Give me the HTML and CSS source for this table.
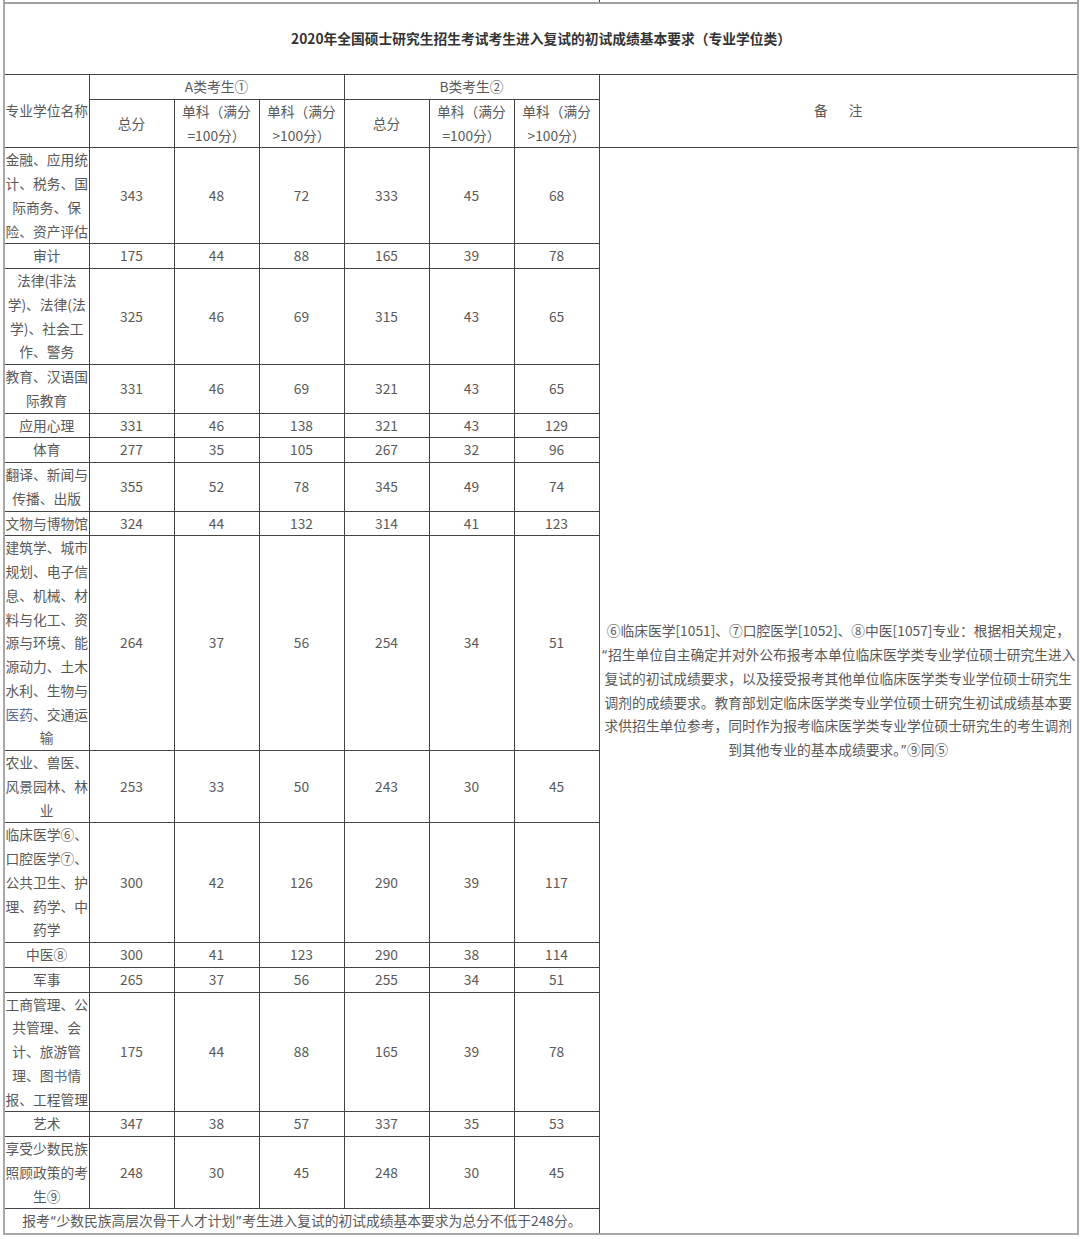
FILE: index.html
```html
<!DOCTYPE html>
<html lang="zh-CN">
<head>
<meta charset="utf-8">
<title>2020年全国硕士研究生招生考试考生进入复试的初试成绩基本要求（专业学位类）</title>
<link rel="stylesheet" href="styles.css">
</head>
<body>
<table class="score">
  <colgroup>
    <col class="c-name">
    <col class="c-num"><col class="c-num"><col class="c-num">
    <col class="c-num"><col class="c-num"><col class="c-num">
    <col class="c-remark">
  </colgroup>
  <tr class="cut"><td colspan="7"></td><td></td></tr>
  <tr>
    <td colspan="8" class="title">2020年全国硕士研究生招生考试考生进入复试的初试成绩基本要求（专业学位类）</td>
  </tr>
  <tr>
    <td rowspan="2">专业学位名称</td>
    <td colspan="3">A类考生①</td>
    <td colspan="3">B类考生②</td>
    <td rowspan="2"><span class="gap">备</span>注</td>
  </tr>
  <tr>
    <td>总分</td><td>单科（满分<br>=100分）</td><td>单科（满分<br>&gt;100分）</td>
    <td>总分</td><td>单科（满分<br>=100分）</td><td>单科（满分<br>&gt;100分）</td>
  </tr>
  <tr>
    <td>金融、应用统计、税务、国际商务、保险、资产评估</td>
    <td>343</td><td>48</td><td>72</td><td>333</td><td>45</td><td>68</td>
    <td rowspan="17" class="remark">⑥临床医学[1051]、⑦口腔医学[1052]、⑧中医[1057]专业：根据相关规定，<span class="q">“</span>招生单位自主确定并对外公布报考本单位临床医学类专业学位硕士研究生进入复试的初试成绩要求，以及接受报考其他单位临床医学类专业学位硕士研究生调剂的成绩要求。教育部划定临床医学类专业学位硕士研究生初试成绩基本要求供招生单位参考，同时作为报考临床医学类专业学位硕士研究生的考生调剂到其他专业的基本成绩要求。<span class="q">”</span>⑨同⑤</td>
  </tr>
  <tr><td>审计</td><td>175</td><td>44</td><td>88</td><td>165</td><td>39</td><td>78</td></tr>
  <tr><td>法律(非法学)、法律(法学)、社会工作、警务</td><td>325</td><td>46</td><td>69</td><td>315</td><td>43</td><td>65</td></tr>
  <tr><td>教育、汉语国际教育</td><td>331</td><td>46</td><td>69</td><td>321</td><td>43</td><td>65</td></tr>
  <tr><td>应用心理</td><td>331</td><td>46</td><td>138</td><td>321</td><td>43</td><td>129</td></tr>
  <tr><td>体育</td><td>277</td><td>35</td><td>105</td><td>267</td><td>32</td><td>96</td></tr>
  <tr><td>翻译、新闻与传播、出版</td><td>355</td><td>52</td><td>78</td><td>345</td><td>49</td><td>74</td></tr>
  <tr><td>文物与博物馆</td><td>324</td><td>44</td><td>132</td><td>314</td><td>41</td><td>123</td></tr>
  <tr><td>建筑学、城市规划、电子信息、机械、材料与化工、资源与环境、能源动力、土木水利、生物与<span class="link">医药</span>、交通运输</td><td>264</td><td>37</td><td>56</td><td>254</td><td>34</td><td>51</td></tr>
  <tr><td>农业、兽医、风景园林、林业</td><td>253</td><td>33</td><td>50</td><td>243</td><td>30</td><td>45</td></tr>
  <tr><td>临床医学⑥、口腔医学⑦、公共卫生、护理、药学、中药学</td><td>300</td><td>42</td><td>126</td><td>290</td><td>39</td><td>117</td></tr>
  <tr><td>中医⑧</td><td>300</td><td>41</td><td>123</td><td>290</td><td>38</td><td>114</td></tr>
  <tr><td>军事</td><td>265</td><td>37</td><td>56</td><td>255</td><td>34</td><td>51</td></tr>
  <tr><td>工商管理、公共管理、会计、旅游管理、图<span class="link">书</span>情报、工程管理</td><td>175</td><td>44</td><td>88</td><td>165</td><td>39</td><td>78</td></tr>
  <tr><td>艺术</td><td>347</td><td>38</td><td>57</td><td>337</td><td>35</td><td>53</td></tr>
  <tr><td>享受少数民族照顾政策的考生⑨</td><td>248</td><td>30</td><td>45</td><td>248</td><td>30</td><td>45</td></tr>
  <tr><td colspan="7">报考<span class="q">“</span>少数民族高层次骨干人才计划<span class="q">”</span>考生进入复试的初试成绩基本要求为总分不低于248分。</td></tr>
</table>
</body>
</html>
```

FILE: styles.css
```css
html, body {
  margin: 0;
  padding: 0;
  background: #ffffff;
}

.score {
  margin-left: 3px;
  width: 1074px;
  table-layout: fixed;
  border-collapse: collapse;
  border: 2px solid #a8a8a8;
  border-top: none;
  font-family: "Noto Sans CJK SC", "Noto Sans", sans-serif;
  font-size: 13.75px;
  line-height: 23.75px;
  color: #595959;
}

.c-name { width: 85px; }
.c-num { width: 85px; }
.c-remark { width: 479px; }

.score td {
  border: 1px solid #444444;
  padding: 0;
  text-align: center;
  vertical-align: middle;
  word-break: normal;
}

.score .cut td {
  border-top: none;
  height: 2px;
  line-height: 0;
}

.score .title {
  border-top: 2px solid #a0a0a0;
  height: 70px;
  font-weight: bold;
  color: #333333;
}

.gap {
  margin-right: 21px;
}

.link {
  color: #5b6b9b;
}

.q {
  font-family: "Noto Sans", "Liberation Sans", sans-serif;
  padding: 0 1px;
}

.score .remark {
  vertical-align: middle;
}
```
